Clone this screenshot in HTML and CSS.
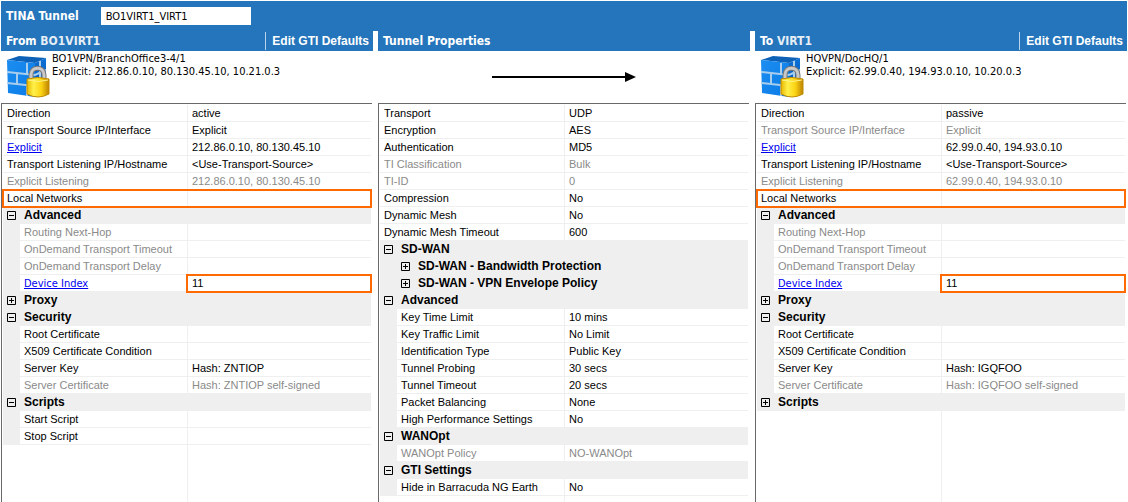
FILE: index.html
```html
<!DOCTYPE html>
<html lang="en">
<head>
<meta charset="utf-8">
<title>TINA Tunnel</title>
<link rel="stylesheet" href="styles.css">
</head>
<body>
<svg class="defs" aria-hidden="true">
  <defs>
    <linearGradient id="front" x1="0" y1="0" x2="1" y2="1"><stop offset="0" stop-color="#1c8df0"/><stop offset="1" stop-color="#0a7be6"/></linearGradient>
    <linearGradient id="side" x1="0" y1="0" x2="0" y2="1"><stop offset="0" stop-color="#0b6fd6"/><stop offset="1" stop-color="#0457ac"/></linearGradient>
    <linearGradient id="gold" x1="0" y1="0" x2="1" y2="0"><stop offset="0" stop-color="#e9b800"/><stop offset=".3" stop-color="#fff04a"/><stop offset=".65" stop-color="#fbd313"/><stop offset="1" stop-color="#bd8300"/></linearGradient>
    <symbol id="firewall" viewBox="0 0 44 44">
      <path d="M1 5 13 1 40 3 29 8Z" fill="#0d62b8"/>
      <path d="M1 5 29 8 29 42 2 38Z" fill="url(#front)"/>
      <path d="M29 8 40 3 40 35 29 42Z" fill="url(#side)"/>
      <path d="M1 17 29 20 40 15M1 28 29 31 40 26M21 8V19M11 18V29M21 30V41M34 6V17M34 18V29" fill="none" stroke="#a9cdec" stroke-width="2"/>
      <path d="M25 26V20C25 11 38 11 38 20V26" fill="none" stroke="#777" stroke-width="5"/>
      <path d="M25 26V20C25 11 38 11 38 20V26" fill="none" stroke="#c9c9c9" stroke-width="3"/>
      <path d="M21 24Q32 21 43 24V39Q32 45 21 39Z" fill="url(#gold)" stroke="#c08c00"/>
      <path d="M22 25Q32 28 42 25" fill="none" stroke="#fff38a"/>
    </symbol>
    <symbol id="minus" viewBox="0 0 9 9"><path d="M.5 .5H8.5V8.5H.5ZM2 4.5H7" fill="none" stroke="#000"/></symbol>
    <symbol id="plus" viewBox="0 0 9 9"><path d="M.5 .5H8.5V8.5H.5ZM2 4.5H7M4.5 2V7" fill="none" stroke="#000"/></symbol>
  </defs>
</svg>
<header class="topbar">
  <label for="name">TINA Tunnel</label>
  <input id="name" class="name" type="text" value="BO1VIRT1_VIRT1">
</header>
<main class="columns">
  <section class="column">
    <div class="heading"><h2>From <span class="peer">BO1VIRT1</span></h2><button class="edit" type="button">Edit GTI Defaults</button></div>
    <div class="summary">
      <svg class="fw" aria-hidden="true"><use href="#firewall"/></svg>
      <p>BO1VPN/BranchOffice3-4/1<br>Explicit: 212.86.0.10, 80.130.45.10, 10.21.0.3</p>
    </div>
    <div class="panel">
      <table>
        <tr><th>Direction</th><td>active</td></tr>
        <tr><th>Transport Source IP/Interface</th><td>Explicit</td></tr>
        <tr><th><a href="#">Explicit</a></th><td>212.86.0.10, 80.130.45.10</td></tr>
        <tr><th>Transport Listening IP/Hostname</th><td>&lt;Use-Transport-Source&gt;</td></tr>
        <tr class="off"><th>Explicit Listening</th><td>212.86.0.10, 80.130.45.10</td></tr>
        <tr class="mark"><th>Local Networks</th><td></td></tr>
        <tr class="group"><th colspan="2"><button type="button"><svg><use href="#minus"/></svg>Advanced</button></th></tr>
        <tr class="sub off"><th>Routing Next-Hop</th><td></td></tr>
        <tr class="sub off"><th>OnDemand Transport Timeout</th><td></td></tr>
        <tr class="sub off"><th>OnDemand Transport Delay</th><td></td></tr>
        <tr class="sub"><th><a class="wide" href="#">Device Index</a></th><td class="mark">11</td></tr>
        <tr class="group"><th colspan="2"><button type="button"><svg><use href="#plus"/></svg>Proxy</button></th></tr>
        <tr class="group"><th colspan="2"><button type="button"><svg><use href="#minus"/></svg>Security</button></th></tr>
        <tr class="sub"><th>Root Certificate</th><td></td></tr>
        <tr class="sub"><th>X509 Certificate Condition</th><td></td></tr>
        <tr class="sub"><th>Server Key</th><td>Hash: ZNTIOP</td></tr>
        <tr class="sub off"><th>Server Certificate</th><td>Hash: ZNTIOP self-signed</td></tr>
        <tr class="group"><th colspan="2"><button type="button"><svg><use href="#minus"/></svg>Scripts</button></th></tr>
        <tr class="sub"><th>Start Script</th><td></td></tr>
        <tr class="sub"><th>Stop Script</th><td></td></tr>
      </table>
    </div>
  </section>
  <section class="column">
    <div class="heading"><h2>Tunnel Properties</h2></div>
    <div class="summary flow">
      <svg class="arrow" viewBox="0 0 144 12" aria-hidden="true"><path d="M0 6H135" stroke="#000" stroke-width="2"/><path d="M133 1 144 6 133 11Z"/></svg>
    </div>
    <div class="panel">
      <table>
        <tr><th>Transport</th><td>UDP</td></tr>
        <tr><th>Encryption</th><td>AES</td></tr>
        <tr><th>Authentication</th><td>MD5</td></tr>
        <tr class="off"><th>TI Classification</th><td>Bulk</td></tr>
        <tr class="off"><th>TI-ID</th><td>0</td></tr>
        <tr><th>Compression</th><td>No</td></tr>
        <tr><th>Dynamic Mesh</th><td>No</td></tr>
        <tr><th>Dynamic Mesh Timeout</th><td>600</td></tr>
        <tr class="group"><th colspan="2"><button type="button"><svg><use href="#minus"/></svg>SD-WAN</button></th></tr>
        <tr class="group sub"><th colspan="2"><button type="button"><svg><use href="#plus"/></svg>SD-WAN - Bandwidth Protection</button></th></tr>
        <tr class="group sub"><th colspan="2"><button type="button"><svg><use href="#plus"/></svg>SD-WAN - VPN Envelope Policy</button></th></tr>
        <tr class="group"><th colspan="2"><button type="button"><svg><use href="#minus"/></svg>Advanced</button></th></tr>
        <tr class="sub"><th>Key Time Limit</th><td>10 mins</td></tr>
        <tr class="sub"><th>Key Traffic Limit</th><td>No Limit</td></tr>
        <tr class="sub"><th>Identification Type</th><td>Public Key</td></tr>
        <tr class="sub"><th>Tunnel Probing</th><td>30 secs</td></tr>
        <tr class="sub"><th>Tunnel Timeout</th><td>20 secs</td></tr>
        <tr class="sub"><th>Packet Balancing</th><td>None</td></tr>
        <tr class="sub"><th>High Performance Settings</th><td>No</td></tr>
        <tr class="group"><th colspan="2"><button type="button"><svg><use href="#minus"/></svg>WANOpt</button></th></tr>
        <tr class="sub off"><th>WANOpt Policy</th><td>NO-WANOpt</td></tr>
        <tr class="group"><th colspan="2"><button type="button"><svg><use href="#minus"/></svg>GTI Settings</button></th></tr>
        <tr class="sub"><th>Hide in Barracuda NG Earth</th><td>No</td></tr>
      </table>
    </div>
  </section>
  <section class="column">
    <div class="heading"><h2>To <span class="peer">VIRT1</span></h2><button class="edit" type="button">Edit GTI Defaults</button></div>
    <div class="summary">
      <svg class="fw" aria-hidden="true"><use href="#firewall"/></svg>
      <p>HQVPN/DocHQ/1<br>Explicit: 62.99.0.40, 194.93.0.10, 10.20.0.3</p>
    </div>
    <div class="panel">
      <table>
        <tr><th>Direction</th><td>passive</td></tr>
        <tr class="off"><th>Transport Source IP/Interface</th><td>Explicit</td></tr>
        <tr><th><a href="#">Explicit</a></th><td>62.99.0.40, 194.93.0.10</td></tr>
        <tr><th>Transport Listening IP/Hostname</th><td>&lt;Use-Transport-Source&gt;</td></tr>
        <tr class="off"><th>Explicit Listening</th><td>62.99.0.40, 194.93.0.10</td></tr>
        <tr class="mark"><th>Local Networks</th><td></td></tr>
        <tr class="group"><th colspan="2"><button type="button"><svg><use href="#minus"/></svg>Advanced</button></th></tr>
        <tr class="sub off"><th>Routing Next-Hop</th><td></td></tr>
        <tr class="sub off"><th>OnDemand Transport Timeout</th><td></td></tr>
        <tr class="sub off"><th>OnDemand Transport Delay</th><td></td></tr>
        <tr class="sub"><th><a class="wide" href="#">Device Index</a></th><td class="mark">11</td></tr>
        <tr class="group"><th colspan="2"><button type="button"><svg><use href="#plus"/></svg>Proxy</button></th></tr>
        <tr class="group"><th colspan="2"><button type="button"><svg><use href="#minus"/></svg>Security</button></th></tr>
        <tr class="sub"><th>Root Certificate</th><td></td></tr>
        <tr class="sub"><th>X509 Certificate Condition</th><td></td></tr>
        <tr class="sub"><th>Server Key</th><td>Hash: IGQFOO</td></tr>
        <tr class="sub off"><th>Server Certificate</th><td>Hash: IGQFOO self-signed</td></tr>
        <tr class="group"><th colspan="2"><button type="button"><svg><use href="#plus"/></svg>Scripts</button></th></tr>
      </table>
    </div>
  </section>
</main>
</body>
</html>
```

FILE: styles.css
```css
:root {
  --blue: #2475bb;
  --line: #efefef;
  --frame: #696969;
  --mark: #ff6a00;
  --ui: "DejaVu Sans Condensed", "DejaVu Sans", sans-serif;
  --grid: "Liberation Sans", Arial, sans-serif;
}
* { box-sizing: border-box; }
body {
  margin: 0;
  padding: 1px 1px 0;
  min-height: 100vh;
  display: flex;
  flex-direction: column;
  background: #fff;
  color: #000;
  font: 11px/13px var(--ui);
}
.defs { position: absolute; width: 0; height: 0; }
.topbar {
  height: 30px;
  padding-left: 5px;
  display: flex;
  align-items: center;
  gap: 22px;
  background: var(--blue);
  color: #fff;
  font-size: 12px;
  font-weight: bold;
}
.name {
  width: 150px;
  height: 18px;
  padding: 0 5px;
  border: 0;
  background: #fff;
  font: 11px var(--ui);
}
.columns {
  flex: 1;
  display: grid;
  grid-template-columns: repeat(3, minmax(0, 1fr));
  gap: 5px;
}
.column { display: flex; flex-direction: column; }
.heading {
  height: 20px;
  padding: 0 4px 0 5px;
  display: flex;
  align-items: center;
  justify-content: space-between;
  background: var(--blue);
  color: #fff;
}
h2 { margin: 0; font: bold 12px var(--ui); }
.peer { color: #e6eef6; }
.edit {
  height: 18px;
  padding: 0 0 0 6px;
  border: 0;
  border-left: 1px solid #b9d3ea;
  background: none;
  color: #fff;
  font: bold 12px var(--grid);
}
.summary {
  height: 52px;
  padding: 1px 0 0 5px;
  display: flex;
  gap: 2px;
}
.summary p { margin: 0; white-space: nowrap; }
.fw { width: 44px; height: 44px; margin-top: 3px; flex: none; }
.flow { padding: 0; align-items: center; justify-content: center; }
.arrow { width: 144px; height: 12px; }
.panel {
  flex: 1;
  margin-right: 1px;
  padding: 1px 1px 0;
  display: flex;
  flex-direction: column;
  border-top: 1px solid var(--frame);
  border-left: 1px solid var(--frame);
}
.panel::after {
  content: "";
  flex: 1;
  margin-left: 50%;
  border-left: 1px solid var(--line);
}
table {
  width: 100%;
  table-layout: fixed;
  border-collapse: separate;
  border-spacing: 0;
  font: 11px/16px var(--grid);
}
th, td {
  width: 50%;
  height: 17px;
  padding: 0 0 0 4px;
  border-bottom: 1px solid var(--line);
  text-align: left;
  font-weight: normal;
  white-space: nowrap;
}
td { border-left: 1px solid var(--line); }
.sub th { border-left: 17px solid var(--line); }
.off { color: #8a8a8a; }
.group th { background: var(--line); }
.group button {
  height: 16px;
  padding: 0;
  display: flex;
  align-items: center;
  gap: 8px;
  border: 0;
  background: none;
  color: #000;
  font: bold 12px var(--grid);
}
.group svg { width: 9px; height: 9px; }
.mark { outline: 2px solid var(--mark); outline-offset: -1px; }
a { color: #0000f0; }
.wide { font-family: var(--ui); line-height: 12px; }
```
